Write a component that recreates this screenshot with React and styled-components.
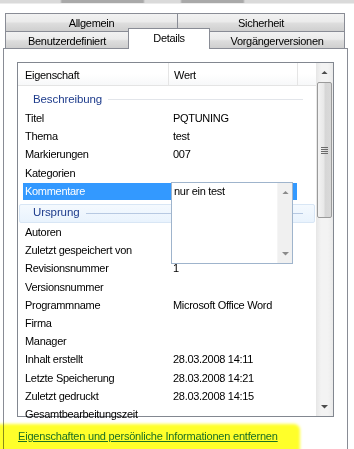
import styled, { createGlobalStyle } from "styled-components"

const Global = createGlobalStyle`
    html, body { margin: 0; padding: 0; background: #fff; }
    body { font-family: "Liberation Sans", Arial, sans-serif; font-size: 11px; letter-spacing: -0.3px; color: #000; }
`

const Window = styled.div`
    width: 354px;
    height: 449px;
    overflow: hidden;
    position: relative;
    background: #fff;
    display: flex;
    flex-direction: column;
`
const TopStrip = styled.div`
    height: 3px;
    flex: none;
    background: linear-gradient(to right, #dadada 0 60px, #a9a9a9 62px 143px, #dadada 145px 180px, #a9a9a9 182px 243px, #dadada 245px);
    border-bottom: 1px solid #ececec;
`
const TabRow = styled.div`
    display: flex;
    margin-left: 5px;
    width: 340px;
    height: ${p => p.$h}px;
    margin-top: ${p => p.$top || 0}px;
    position: relative;
    z-index: ${p => p.$z || 1};
`
const Tab = styled.div`
    width: ${p => p.$w}px;
    box-sizing: border-box;
    border: 1px solid #898c95;
    border-bottom: none;
    margin-right: -1px;
    background: linear-gradient(#f2f2f2, #ebebeb 45%, #dddddd 55%, #cfcfcf);
    display: flex;
    align-items: center;
    justify-content: center;
    padding-top: 1px;
    &:last-child { margin-right: 0; }
`
const ActiveTab = styled(Tab)`
    background: #fff;
    margin-top: -3px;
    height: 21px;
    align-items: flex-start;
    padding-top: 3px;
    position: relative;
    z-index: 3;
`
const Panel = styled.div`
    margin-left: 3px;
    width: 345px;
    flex: 1;
    box-sizing: border-box;
    border: 1px solid #898c95;
    border-bottom: none;
    padding: 13px 0 0 13px;
    position: relative;
    z-index: 2;
    background: #fff;
`
const ListBox = styled.div`
    width: 317px;
    height: 355px;
    box-sizing: border-box;
    border: 1px solid #828790;
    display: flex;
`
const ListContent = styled.div`
    flex: 1;
    position: relative;
`
const Header = styled.div`
    height: 22px;
    display: flex;
    border-bottom: 1px solid #e4e4e4;
    background: linear-gradient(#ffffff, #ffffff 50%, #f7f8f9);
`
const HeadCell = styled.div`
    width: ${p => p.$w ? p.$w + "px" : "auto"};
    flex: ${p => p.$w ? "none" : 1};
    box-sizing: border-box;
    padding-left: ${p => p.$pad}px;
    padding-top: 2px;
    display: flex;
    align-items: center;
    border-right: 1px solid #e5e5e5;
    &:last-child { border-right: none; }
`
const Group = styled.div`
    margin: 4px 1px 0 1px;
    height: 19px;
    box-sizing: border-box;
    display: flex;
    align-items: center;
    padding-left: 13px;
    padding-right: 11px;
    border: 1px solid ${p => p.$hover ? "#d8e6f5" : "transparent"};
    border-radius: 2px;
    background: ${p => p.$hover ? "linear-gradient(#f4f9fe, #e9f3fd)" : "transparent"};
`
const GroupTitle = styled.span`
    color: #1e3c8c;
    font-size: 11.5px;
    letter-spacing: -0.1px;
    margin-right: 6px;
    margin-top: -2px;
`
const GroupLine = styled.div`
    flex: 1;
    height: 1px;
    background: ${p => p.$hover ? "#b7c9e2" : "#e2e5ea"};
`
const Row = styled.div`
    height: 18.2px;
    margin: 0 19px 0 5px;
    display: flex;
    align-items: center;
    position: relative;
    background: ${p => p.$selected ? "#3399ff" : "transparent"};
    color: ${p => p.$selected ? "#fff" : "#000"};
    border-top: ${p => p.$selected ? "1px solid #fff" : "none"};
    box-sizing: border-box;
`
const NameCell = styled.div`
    width: 148px;
    padding-left: 2px;
    box-sizing: border-box;
    white-space: nowrap;
`
const ValueCell = styled.div`
    padding-left: 2px;
    white-space: nowrap;
`
const Editor = styled.div`
    position: absolute;
    left: 148px;
    top: -1px;
    width: 122px;
    height: 82px;
    box-sizing: border-box;
    border: 1px solid #9fb4cc;
    background: #fff;
    color: #000;
    display: flex;
    z-index: 5;
`
const EditorText = styled.div`
    flex: 1;
    padding: 2px 0 0 2px;
`
const MiniScroll = styled.div`
    width: 15px;
    background: #f0f0f0;
    border-left: 1px solid #f5f5f5;
    display: flex;
    flex-direction: column;
    justify-content: space-between;
    align-items: center;
    padding: 7px 0 6px;
    box-sizing: border-box;
`
const Scrollbar = styled.div`
    width: 17px;
    flex: none;
    background: linear-gradient(to right, #e6e6e6, #f3f3f3 30%, #f3f3f3 70%, #eaeaea);
    display: flex;
    flex-direction: column;
    align-items: center;
`
const ArrowBox = styled.div`
    height: 18px;
    width: 17px;
    display: flex;
    align-items: center;
    justify-content: center;
`
const Thumb = styled.div`
    width: 15px;
    height: 136px;
    box-sizing: border-box;
    border: 1px solid #9a9a9a;
    border-radius: 2px;
    background: linear-gradient(to right, #f3f3f3, #e8e8e8 45%, #d6d6d6 55%, #d9d9d9);
    display: flex;
    align-items: center;
    justify-content: center;
    margin-top: 1px;
`
const Track = styled.div`
    flex: 1;
`
const Footer = styled.div`
    padding: 13px 0 0 1px;
    font-size: 11px;
    letter-spacing: -0.2px;
`
const Link = styled.a`
    color: #1b6fd0;
    text-decoration: underline;
    white-space: nowrap;
`
const Highlight = styled.div`
    position: absolute;
    left: -6px;
    top: 424px;
    width: 306px;
    height: 32px;
    background: #ffff2a;
    border-radius: 6px;
    filter: blur(1.5px);
    mix-blend-mode: multiply;
    z-index: 10;
    pointer-events: none;
`

const Arrow = ({ up, size = 7, color = "#4d4d4d" }) => (
    <svg width={size} height={size / 2 + 1} viewBox="0 0 8 5">
        <path d={up ? "M0 5 L4 1 L8 5 Z" : "M0 0 L4 4 L8 0 Z"} fill={color} />
    </svg>
)

const Grip = () => (
    <svg width="7" height="7" viewBox="0 0 7 7">
        {[0, 2, 4, 6].map(y => (
            <rect key={y} x="0" y={y} width="7" height="1" fill="#6b6b6b" />
        ))}
    </svg>
)

const beschreibung = [
    ["Titel", "PQTUNING"],
    ["Thema", "test"],
    ["Markierungen", "007"],
    ["Kategorien", ""],
]
const ursprung = [
    ["Autoren", ""],
    ["Zuletzt gespeichert von", ""],
    ["Revisionsnummer", "1"],
    ["Versionsnummer", ""],
    ["Programmname", "Microsoft Office Word"],
    ["Firma", ""],
    ["Manager", ""],
    ["Inhalt erstellt", "28.03.2008 14:11"],
    ["Letzte Speicherung", "28.03.2008 14:21"],
    ["Zuletzt gedruckt", "28.03.2008 14:15"],
    ["Gesamtbearbeitungszeit", ""],
]

const App = () => {
    return (
        <Window>
            <Global />
            <TopStrip />
            <TabRow $h={18} $top={9}>
                <Tab $w={173}>Allgemein</Tab>
                <Tab $w={168}>Sicherheit</Tab>
            </TabRow>
            <TabRow $h={17} $z={3}>
                <Tab $w={124}>Benutzerdefiniert</Tab>
                <ActiveTab $w={82}>Details</ActiveTab>
                <Tab $w={136}>Vorgängerversionen</Tab>
            </TabRow>
            <Panel>
                <ListBox>
                    <ListContent>
                        <Header>
                            <HeadCell $w={151} $pad={7}>Eigenschaft</HeadCell>
                            <HeadCell $w={129} $pad={5}>Wert</HeadCell>
                            <HeadCell />
                        </Header>
                        <Group>
                            <GroupTitle>Beschreibung</GroupTitle>
                            <GroupLine />
                        </Group>
                        {beschreibung.map(([n, v]) => (
                            <Row key={n}>
                                <NameCell>{n}</NameCell>
                                <ValueCell>{v}</ValueCell>
                            </Row>
                        ))}
                        <Row $selected>
                            <NameCell>Kommentare</NameCell>
                            <Editor>
                                <EditorText>nur ein test</EditorText>
                                <MiniScroll>
                                    <Arrow up size={7} color="#8a8a8a" />
                                    <Arrow size={7} color="#8a8a8a" />
                                </MiniScroll>
                            </Editor>
                        </Row>
                        <Group $hover>
                            <GroupTitle>Ursprung</GroupTitle>
                            <GroupLine $hover />
                        </Group>
                        {ursprung.map(([n, v]) => (
                            <Row key={n}>
                                <NameCell>{n}</NameCell>
                                <ValueCell>{v}</ValueCell>
                            </Row>
                        ))}
                    </ListContent>
                    <Scrollbar>
                        <ArrowBox><Arrow up /></ArrowBox>
                        <Thumb><Grip /></Thumb>
                        <Track />
                        <ArrowBox><Arrow /></ArrowBox>
                    </Scrollbar>
                </ListBox>
                <Footer>
                    <Link>Eigenschaften und persönliche Informationen entfernen</Link>
                </Footer>
            </Panel>
            <Highlight />
        </Window>
    )
}

export default App
